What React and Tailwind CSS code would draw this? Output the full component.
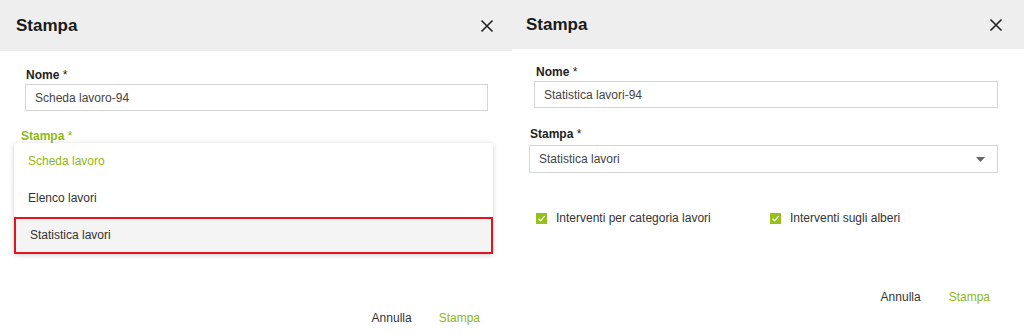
import React from 'react';

const GREEN = 'text-[#8db814]';

const CloseIcon = () => (
  <svg width="14" height="14" viewBox="0 0 14 14" className="text-[#222]">
    <path d="M1.5 1.5 L12.5 12.5 M12.5 1.5 L1.5 12.5" stroke="currentColor" strokeWidth="1.6" fill="none" />
  </svg>
);

const Check = () => (
  <span className="w-[11px] h-[11px] bg-[#95bf1a] flex items-center justify-center">
    <svg width="9" height="9" viewBox="0 0 9 9">
      <path d="M1.5 4.8 L3.6 6.8 L7.6 2.2" stroke="#fff" strokeWidth="1.2" fill="none" />
    </svg>
  </span>
);

const Label = ({ children, className = '' }) => (
  <div className={`text-[12px] font-bold leading-4 ${className}`}>
    {children} <span className="font-normal">*</span>
  </div>
);

const LeftDialog = () => {
  const items = ['Scheda lavoro', 'Elenco lavori', 'Statistica lavori'];
  return (
    <div className="w-[512px] h-[333px] flex flex-col bg-white">
      <div className="h-[51px] bg-[#eeeeee] flex items-center justify-between pl-4 pr-[18px]">
        <span className="text-[17px] font-bold text-[#1a1a1a]">Stampa</span>
        <CloseIcon />
      </div>
      <Label className="mt-[16px] ml-[26px] text-[#222]">Nome</Label>
      <div className="mt-[1px] ml-[25px] w-[463px] h-[27px] border border-[#d6d6d6] flex items-center pl-[9px] text-[12px] text-[#444]">
        Scheda lavoro-94
      </div>
      <Label className={`mt-[17px] ml-[21px] ${GREEN}`}>Stampa</Label>
      <div className="-mt-[1px] ml-[14px] w-[479px] bg-white shadow-[0_1px_5px_rgba(0,0,0,0.2)] rounded-[2px] flex flex-col">
        {items.map((item, i) => (
          <div
            key={item}
            className={`h-[37px] flex items-center pl-[14px] pb-[2px] text-[12px] ${
              i === 0 ? GREEN : 'text-[#333]'
            } ${i === 2 ? 'bg-[#f4f4f4] border-[2px] border-[#e0161c] pl-[12px]' : ''}`}
          >
            {item}
          </div>
        ))}
      </div>
      <div className="flex-1 flex items-end justify-end gap-[27px] pr-[32px] pb-[6px] text-[12px]">
        <span className="text-[#333]">Annulla</span>
        <span className={GREEN}>Stampa</span>
      </div>
    </div>
  );
};

const RightDialog = () => (
  <div className="flex-1 h-[333px] flex flex-col bg-white">
    <div className="h-[49px] bg-[#eeeeee] flex items-center justify-between pl-[14px] pr-[21px]">
      <span className="text-[17px] font-bold text-[#1a1a1a]">Stampa</span>
      <CloseIcon />
    </div>
    <Label className="mt-[15px] ml-[24px] text-[#222]">Nome</Label>
    <div className="mt-[1px] ml-[22px] w-[464px] h-[27px] border border-[#d6d6d6] flex items-center pl-[9px] text-[12px] text-[#444]">
      Statistica lavori-94
    </div>
    <Label className="mt-[18px] ml-[18px] text-[#222]">Stampa</Label>
    <div className="mt-[3px] ml-[17px] w-[469px] h-[28px] border border-[#d6d6d6] flex items-center justify-between pl-[9px] pr-[12px] text-[12px] text-[#444]">
      <span>Statistica lavori</span>
      <svg width="9" height="5" viewBox="0 0 9 5">
        <path d="M0 0 L9 0 L4.5 5 Z" fill="#666" />
      </svg>
    </div>
    <div className="mt-[37px] ml-[24px] flex items-center h-[16px] text-[12px] text-[#333]">
      <div className="w-[234px] flex items-center gap-[9px]">
        <Check />
        <span>Interventi per categoria lavori</span>
      </div>
      <div className="flex items-center gap-[9px]">
        <Check />
        <span>Interventi sugli alberi</span>
      </div>
    </div>
    <div className="mt-[62px] flex justify-end gap-[28px] pr-[34px] text-[12px]">
      <span className="text-[#333]">Annulla</span>
      <span className={GREEN}>Stampa</span>
    </div>
  </div>
);

export default function App() {
  return (
    <div className="w-[1024px] h-[333px] flex overflow-hidden bg-white font-['Liberation_Sans',Arial,sans-serif]">
      <LeftDialog />
      <RightDialog />
    </div>
  );
}
